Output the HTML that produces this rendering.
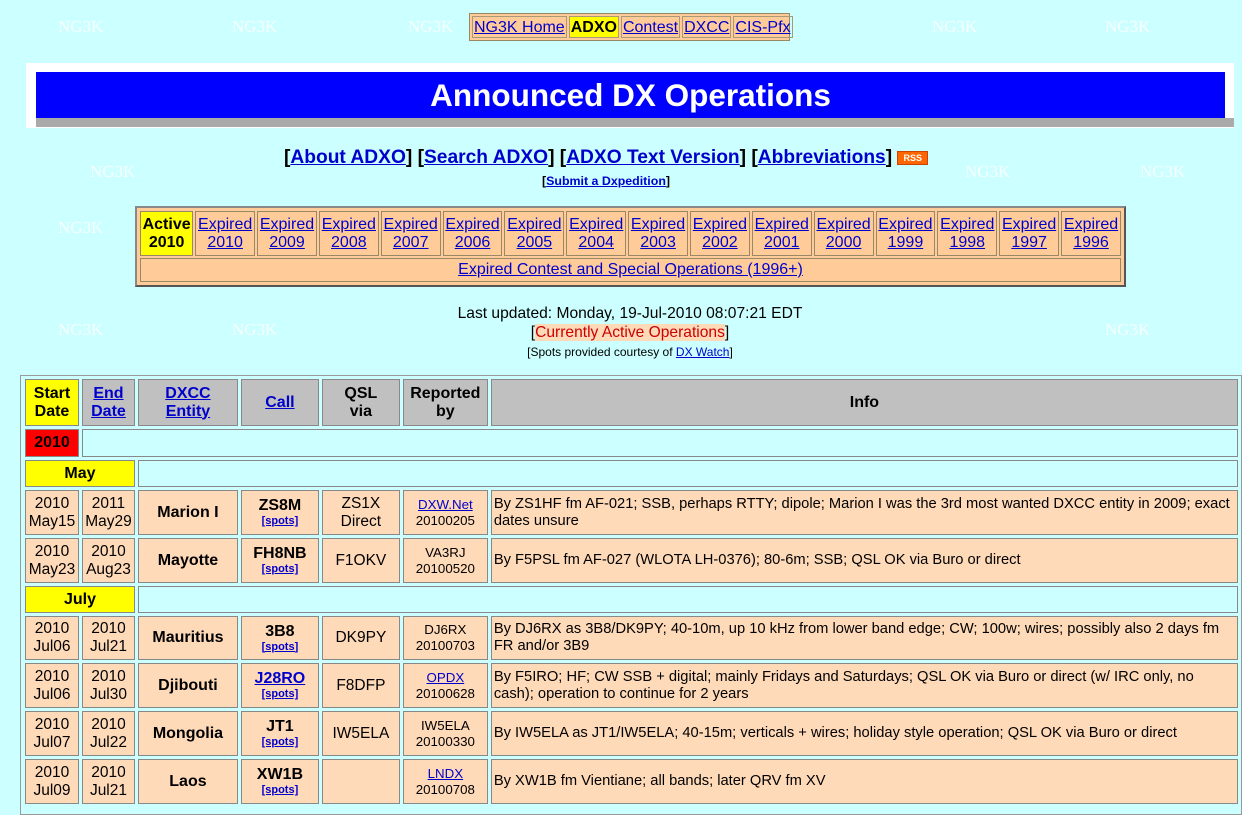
<!DOCTYPE html>
<html><head><meta charset="utf-8"><style>
body{margin:0;background:#ccffff;font-family:"Liberation Sans",Arial,sans-serif;width:1242px;height:808px;overflow:hidden;position:relative}
a{color:#0000cc}
.wm{position:absolute;color:#fff;font-family:"Liberation Serif",serif;font-size:17px;opacity:.85}
.abs{position:absolute}
#nav{left:469px;top:13px;width:321px;height:28px;background:#ffcc99;border:1px solid #998866;box-sizing:border-box;display:flex;padding:2px;gap:2px}
#nav span{border:1px solid #aa9977;font-size:16px;line-height:22px;padding:0 1px;white-space:nowrap}
#ban{left:26px;top:63px;width:1208px;height:65px;background:#fff}
#ban .sh{position:absolute;left:10px;top:55px;width:1198px;height:9px;background:#aaa}
#ban .bl{position:absolute;left:10px;top:9px;width:1189px;height:46px;background:#0000ff;color:#fff;font-weight:bold;font-size:31.5px;text-align:center;line-height:46px}
#links{left:0;width:1212px;top:147px;text-align:center;font-weight:bold;font-size:19.2px}
#yt{left:135px;top:206px;width:991px;height:81px;background:#ffcc99;border:2px solid #888;border-right-color:#555;border-bottom-color:#555;box-sizing:border-box}
#yt table{border-collapse:separate;border-spacing:2px;position:absolute;left:1px;top:1px;width:985px}
#yt td{border:1px solid #998866;text-align:center;font-size:16px;line-height:18px;padding:0;height:43px}
#yt tr.r2 td{height:22px}
#main{left:20px;top:375px;width:1222px;height:440px;border:1px solid #999;box-sizing:border-box}
#main table{border-collapse:separate;border-spacing:3px;position:absolute;left:1px;top:0}
#main td{border:1px solid #888;box-sizing:border-box;padding:0;font-size:15.5px;text-align:center;line-height:18px}
.hd{background:#c0c0c0;font-weight:bold;font-size:16px!important}
.y{background:#ffff00}
.p{background:#ffdab9}
.c{background:#ccffff}
.b{font-weight:bold;font-size:16px!important}
.sp{font-size:11px;font-weight:bold;display:block;line-height:13px}
.inf{text-align:left!important;font-size:14.7px!important;padding-left:2px!important;line-height:17px!important}
.rep{font-size:13.3px!important;line-height:16px!important}
</style></head><body>
<div class="wm" style="left:58px;top:17px">NG3K</div><div class="wm" style="left:232px;top:17px">NG3K</div><div class="wm" style="left:408px;top:17px">NG3K</div><div class="wm" style="left:932px;top:17px">NG3K</div><div class="wm" style="left:1105px;top:17px">NG3K</div>
<div class="wm" style="left:90px;top:162px">NG3K</div><div class="wm" style="left:965px;top:162px">NG3K</div><div class="wm" style="left:1140px;top:162px">NG3K</div>
<div class="wm" style="left:58px;top:218px">NG3K</div><div class="wm" style="left:58px;top:320px">NG3K</div><div class="wm" style="left:232px;top:320px">NG3K</div><div class="wm" style="left:1105px;top:320px">NG3K</div>
<div class="abs" id="nav"><span><a href="#">NG3K Home</a></span><span style="background:#ffff00;font-weight:bold">ADXO</span><span><a href="#">Contest</a></span><span><a href="#">DXCC</a></span><span><a href="#">CIS-Pfx</a></span></div>
<div class="abs" id="ban"><div class="sh"></div><div class="bl">Announced DX Operations</div></div>
<div class="abs" id="links">[<a href="#">About ADXO</a>] [<a href="#">Search ADXO</a>] [<a href="#">ADXO Text Version</a>] [<a href="#">Abbreviations</a>] <span style="display:inline-block;background:#f60;color:#fff;font-size:9px;padding:1px 5px;vertical-align:middle;border:1px solid #c40">RSS</span><br><span style="font-size:12.4px;line-height:14px">[<a href="#">Submit a Dxpedition</a>]</span></div>
<div class="abs" id="yt"><table><tr>
<td style="background:#ff0;font-weight:bold">Active<br>2010</td>
<td><a href="#">Expired<br>2010</a></td><td><a href="#">Expired<br>2009</a></td><td><a href="#">Expired<br>2008</a></td><td><a href="#">Expired<br>2007</a></td><td><a href="#">Expired<br>2006</a></td><td><a href="#">Expired<br>2005</a></td><td><a href="#">Expired<br>2004</a></td><td><a href="#">Expired<br>2003</a></td><td><a href="#">Expired<br>2002</a></td><td><a href="#">Expired<br>2001</a></td><td><a href="#">Expired<br>2000</a></td><td><a href="#">Expired<br>1999</a></td><td><a href="#">Expired<br>1998</a></td><td><a href="#">Expired<br>1997</a></td><td><a href="#">Expired<br>1996</a></td></tr>
<tr class="r2"><td colspan="16"><a href="#">Expired Contest and Special Operations (1996+)</a></td></tr></table></div>
<div class="abs" style="left:0;width:1260px;top:304px;text-align:center;font-size:15.6px;line-height:19px">Last updated: Monday, 19-Jul-2010 08:07:21 EDT<br>[<span style="background:#ffdab9;color:#c00">Currently Active Operations</span>]<br><span style="font-size:12px">[Spots provided courtesy of <a href="#">DX Watch</a>]</span></div>
<div class="abs" id="main"><table>
<tr style="height:47px"><td class="y b" style="width:54px">Start<br>Date</td><td class="hd" style="width:53px"><a href="#">End<br>Date</a></td><td class="hd" style="width:100px"><a href="#">DXCC<br>Entity</a></td><td class="hd" style="width:78px"><a href="#">Call</a></td><td class="hd" style="width:78px">QSL<br>via</td><td class="hd" style="width:85px">Reported<br>by</td><td class="hd" style="width:748px">Info</td></tr>
<tr style="height:28px"><td style="background:#f00" class="b">2010</td><td colspan="6" class="c"></td></tr>
<tr style="height:27px"><td colspan="2" class="y b">May</td><td colspan="5" class="c"></td></tr>
<tr style="height:45px"><td class="p">2010<br>May15</td><td class="p">2011<br>May29</td><td class="p b">Marion I</td><td class="p b">ZS8M<a class="sp" href="#">[spots]</a></td><td class="p">ZS1X<br>Direct</td><td class="p rep"><a href="#">DXW.Net</a><br>20100205</td><td class="p inf">By ZS1HF fm AF-021; SSB, perhaps RTTY; dipole; Marion I was the 3rd most wanted DXCC entity in 2009; exact dates unsure</td></tr>
<tr style="height:45px"><td class="p">2010<br>May23</td><td class="p">2010<br>Aug23</td><td class="p b">Mayotte</td><td class="p b">FH8NB<a class="sp" href="#">[spots]</a></td><td class="p">F1OKV</td><td class="p rep">VA3RJ<br>20100520</td><td class="p inf">By F5PSL fm AF-027 (WLOTA LH-0376); 80-6m; SSB; QSL OK via Buro or direct</td></tr>
<tr style="height:27px"><td colspan="2" class="y b">July</td><td colspan="5" class="c"></td></tr>
<tr style="height:44px"><td class="p">2010<br>Jul06</td><td class="p">2010<br>Jul21</td><td class="p b">Mauritius</td><td class="p b">3B8<a class="sp" href="#">[spots]</a></td><td class="p">DK9PY</td><td class="p rep">DJ6RX<br>20100703</td><td class="p inf">By DJ6RX as 3B8/DK9PY; 40-10m, up 10 kHz from lower band edge; CW; 100w; wires; possibly also 2 days fm FR and/or 3B9</td></tr>
<tr style="height:45px"><td class="p">2010<br>Jul06</td><td class="p">2010<br>Jul30</td><td class="p b">Djibouti</td><td class="p b"><a href="#">J28RO</a><a class="sp" href="#">[spots]</a></td><td class="p">F8DFP</td><td class="p rep"><a href="#">OPDX</a><br>20100628</td><td class="p inf">By F5IRO; HF; CW SSB + digital; mainly Fridays and Saturdays; QSL OK via Buro or direct (w/ IRC only, no cash); operation to continue for 2 years</td></tr>
<tr style="height:45px"><td class="p">2010<br>Jul07</td><td class="p">2010<br>Jul22</td><td class="p b">Mongolia</td><td class="p b">JT1<a class="sp" href="#">[spots]</a></td><td class="p">IW5ELA</td><td class="p rep">IW5ELA<br>20100330</td><td class="p inf">By IW5ELA as JT1/IW5ELA; 40-15m; verticals + wires; holiday style operation; QSL OK via Buro or direct</td></tr>
<tr style="height:45px"><td class="p">2010<br>Jul09</td><td class="p">2010<br>Jul21</td><td class="p b">Laos</td><td class="p b">XW1B<a class="sp" href="#">[spots]</a></td><td class="p"></td><td class="p rep"><a href="#">LNDX</a><br>20100708</td><td class="p inf">By XW1B fm Vientiane; all bands; later QRV fm XV</td></tr>
</table></div>
</body></html>
